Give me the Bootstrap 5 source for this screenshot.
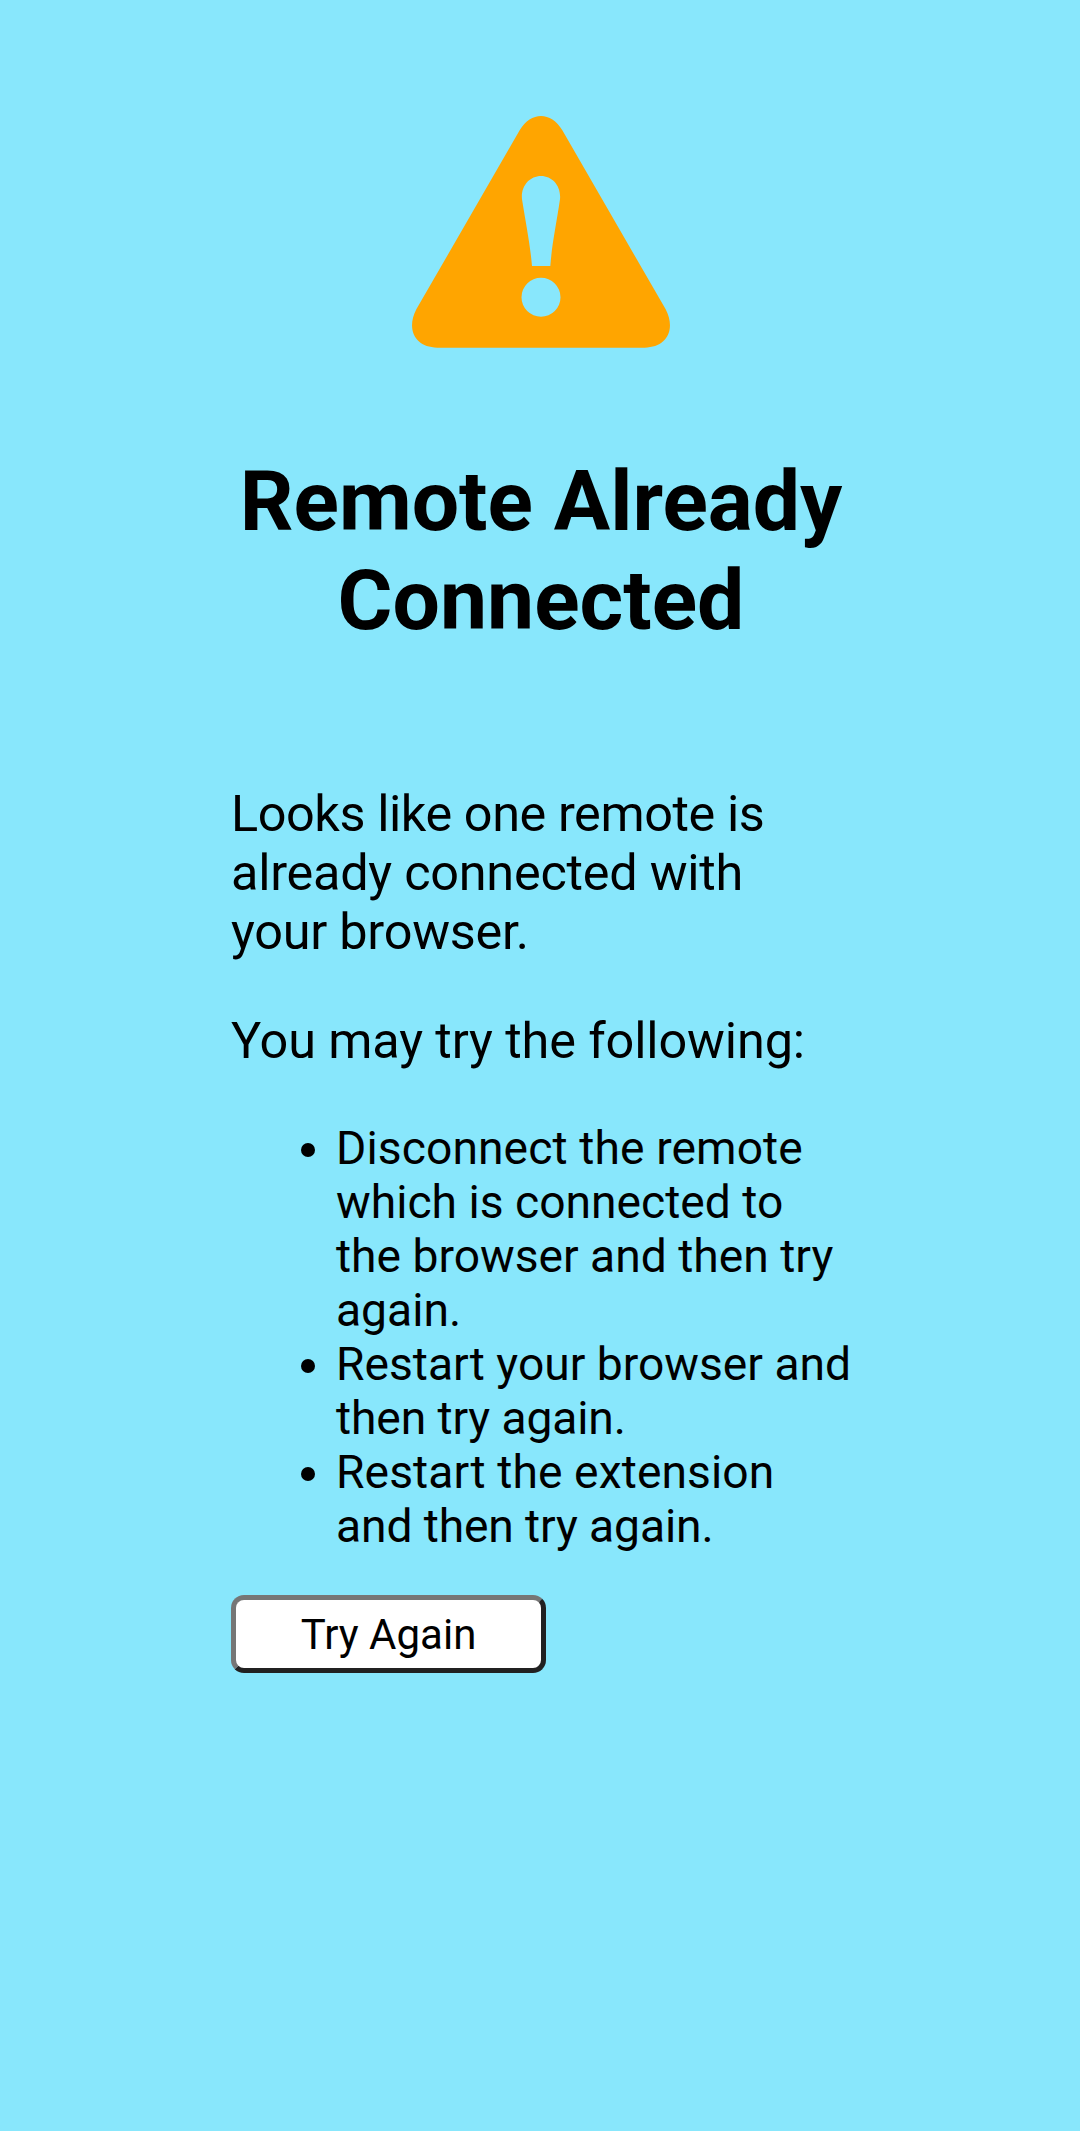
<!DOCTYPE html>
<html lang="en">
<head>
<meta charset="utf-8">
<meta name="viewport" content="width=device-width, initial-scale=1">
<title>Remote Already Connected</title>
<link href="https://cdn.jsdelivr.net/npm/bootstrap@5.3.0/dist/css/bootstrap.min.css" rel="stylesheet">
<style>
body { background: #88e7fc; color: #000; font-family: Roboto, "Liberation Sans", sans-serif; }
.notice { width: 620px; margin-left: 231px; padding-top: 100px; }
.warn-icon { width: 280px; height: 260px; margin-left: 169px; }
.notice-title { font-size: 84px; line-height: 99px; font-weight: 700; margin: 92px 0 134px; }
.notice-text { font-size: 50.4px; line-height: 59px; margin-bottom: 50px; letter-spacing: -.25px; }
.notice-text .tight { letter-spacing: -.42px; }
.notice-text.prompt-line { letter-spacing: -.12px; }
.tips { font-size: 46.2px; line-height: 54px; padding-left: 105px; margin: 51px 0 42px; }
.tips .loose { letter-spacing: .1px; }
.tips .snug { letter-spacing: -.12px; }
.retry { width: 315px; height: 78px; padding: 1px 0 0; font-size: 42px; line-height: 1; color: #000; background: #fff; border: 5px solid; border-color: #767676 #212121 #212121 #767676; border-radius: 13px; }
</style>
</head>
<body class="min-vh-100">
<main class="notice">
  <svg class="warn-icon d-block" viewBox="0 0 840 780" aria-hidden="true">
    <path fill="#ffa500" fill-rule="evenodd" d="M359 91C393 34 453 34 487 91L797 628C829 690 799 743 734 743H112C47 743 17 690 49 628ZM423 228C389 228 362 258 366 298C379 380 390 430 396 498H451C456 430 468 380 480 298C484 258 457 228 423 228ZM423 533A58.5 58.5 0 1 0 423 650A58.5 58.5 0 1 0 423 533Z"/>
  </svg>
  <h1 class="notice-title text-center">Remote Already Connected</h1>
  <p class="notice-text"><span class="tight">Looks like one remote is</span> already connected with<br>your browser.</p>
  <p class="notice-text prompt-line">You may try the following:</p>
  <ul class="tips">
    <li><span class="loose">Disconnect the remote</span> which is connected to<br>the browser and then try again.</li>
    <li><span class="text-nowrap">Restart your browser and</span><br><span class="snug">then try again.</span></li>
    <li><span class="loose">Restart the extension</span><br><span class="snug">and then try again.</span></li>
  </ul>
  <button type="button" class="btn retry d-block">Try Again</button>
</main>
<script src="https://cdn.jsdelivr.net/npm/bootstrap@5.3.0/dist/js/bootstrap.bundle.min.js"></script>
</body>
</html>
